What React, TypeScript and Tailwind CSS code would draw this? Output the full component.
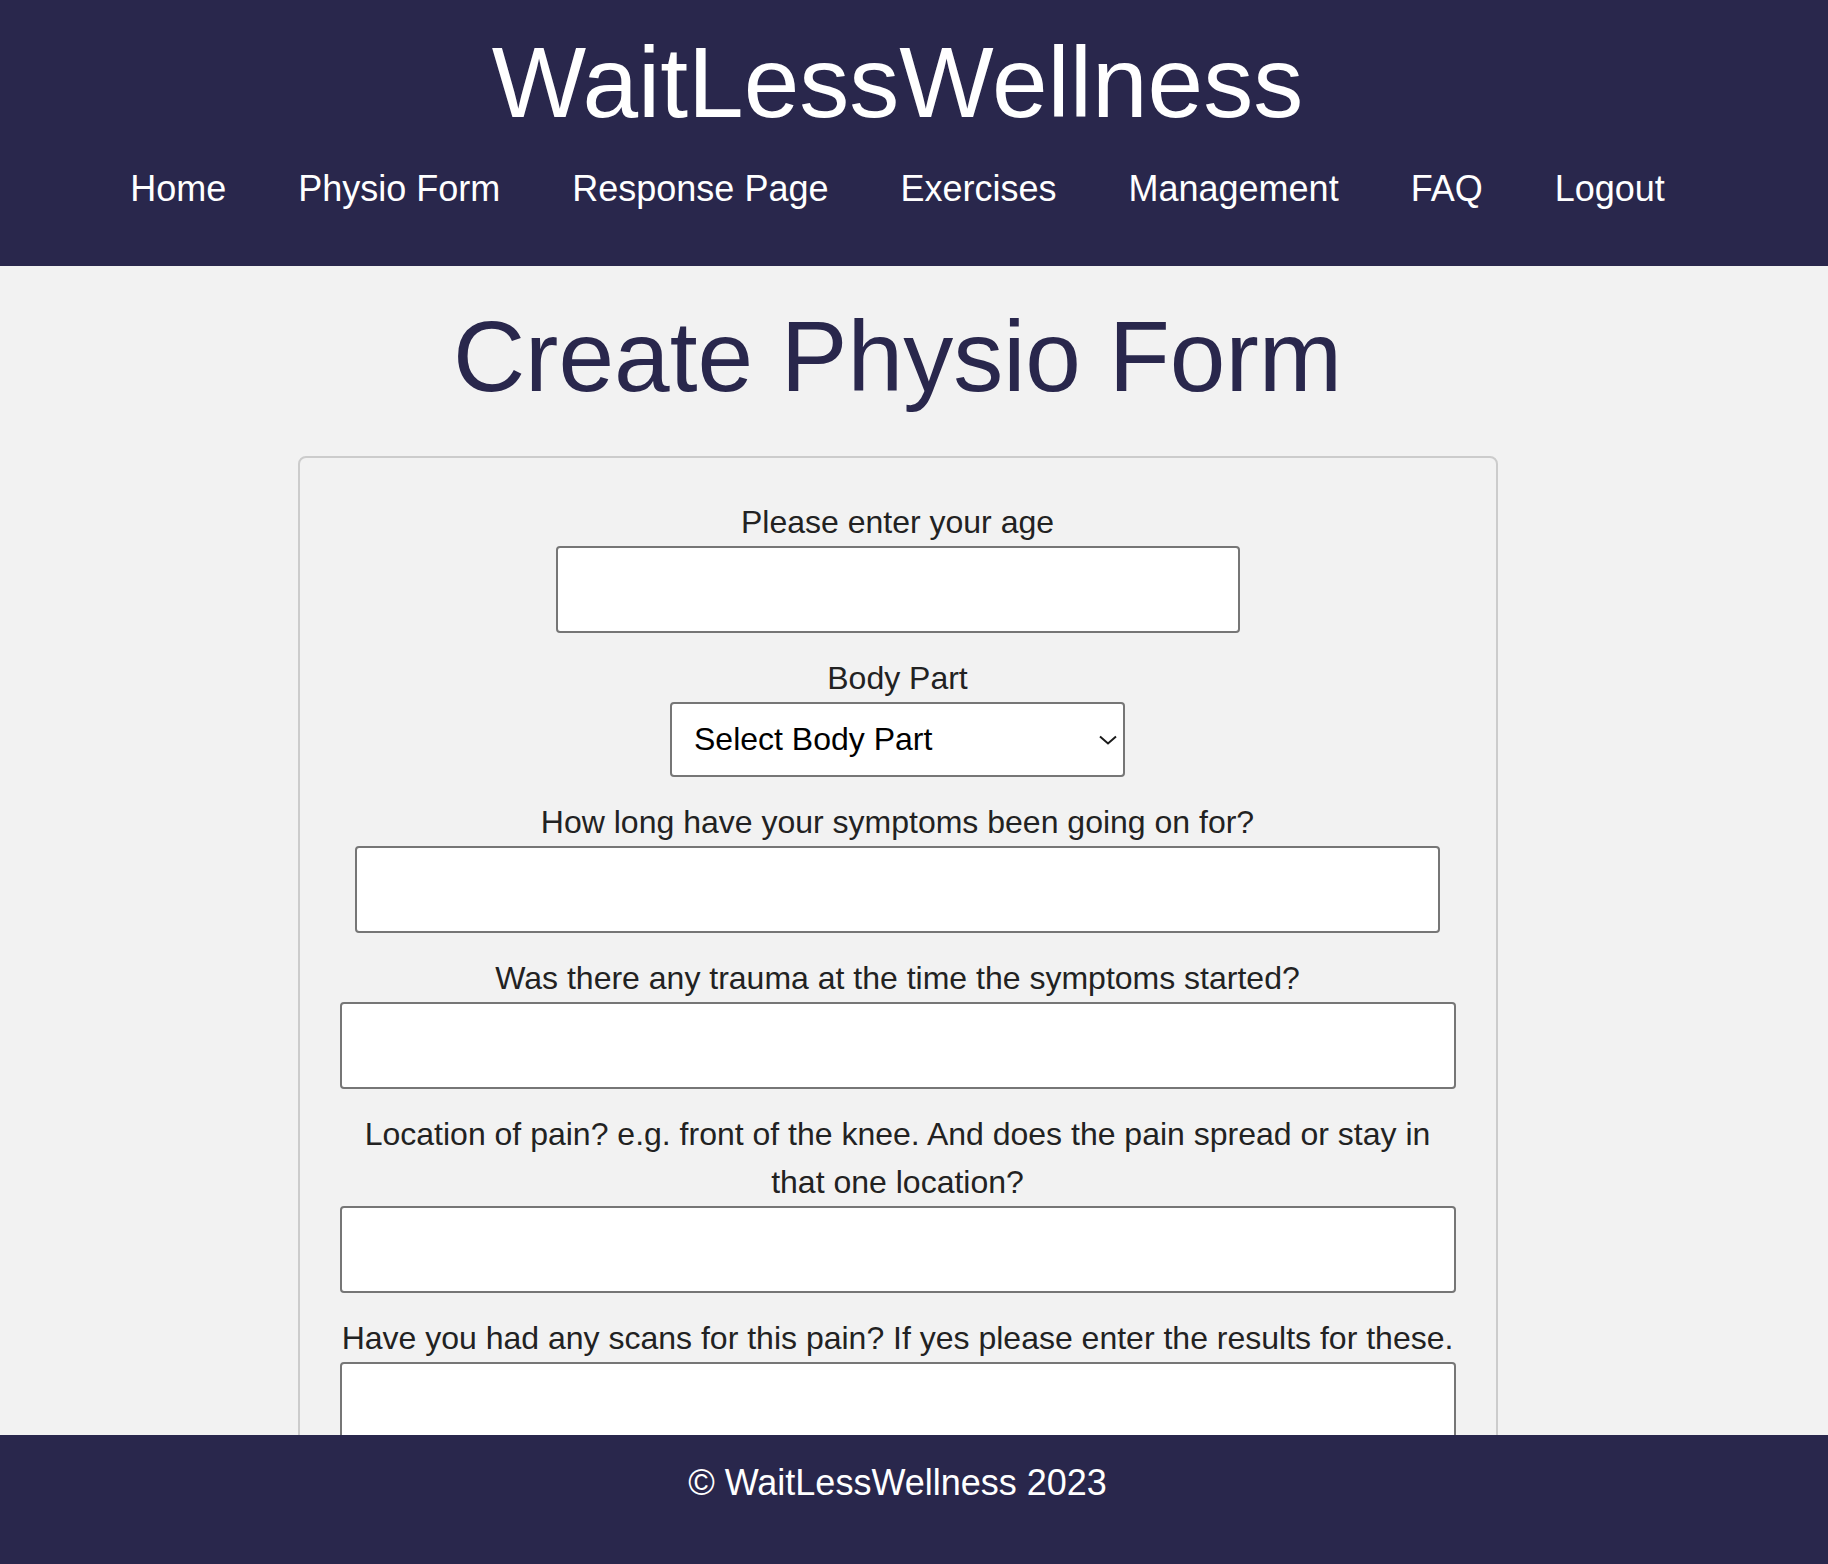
import { useState } from "react"

const NAV_LINKS = ["Home", "Physio Form", "Response Page", "Exercises", "Management", "FAQ", "Logout"]

const BODY_PARTS = ["Knee", "Shoulder", "Back", "Neck", "Hip", "Ankle", "Elbow", "Wrist"]

interface FieldProps {
    label: string
    width: string
    value: string
    onChange: (v: string) => void
}

function Field({ label, width, value, onChange }: FieldProps) {
    return (
        <div className="flex flex-col items-center mb-[21.5px] w-full">
            <label className="text-[32px] leading-[48px] text-[#222] text-center">{label}</label>
            <input
                type="text"
                value={value}
                onChange={e => onChange(e.target.value)}
                className={`${width} h-[86.5px] bg-white border-2 border-[#767676] rounded-[4px] px-3 text-[32px] outline-none`}
            />
        </div>
    )
}

export default function App() {
    const [form, setForm] = useState({
        age: "",
        bodyPart: "",
        duration: "",
        trauma: "",
        location: "",
        scans: "",
    })

    const set = (key: keyof typeof form) => (v: string) => setForm(f => ({ ...f, [key]: v }))

    return (
        <div className="relative h-screen overflow-hidden bg-[#f2f2f2] font-['Liberation_Sans',Arial,sans-serif]">
            <header className="bg-[#29274c] pt-[32px] pb-[59px] pr-[33px]">
                <h1 className="text-white text-center text-[100px] leading-[100px]">WaitLessWellness</h1>
                <nav className="mt-[39px] flex justify-center gap-[72px] text-[36px] leading-[36px] text-white">
                    {NAV_LINKS.map(link => (
                        <a key={link} href="#" className="whitespace-nowrap">{link}</a>
                    ))}
                </nav>
            </header>

            <main className="pr-[33px]">
                <h2 className="mt-[40px] text-center text-[100px] leading-[100px] text-[#29274c]">Create Physio Form</h2>

                <form
                    className="mt-[50px] mx-auto w-[1200px] border-2 border-[#cccccc] rounded-[8px] px-[40px] pt-[40px] pb-[40px] flex flex-col items-center"
                    onSubmit={e => e.preventDefault()}
                >
                    <Field label="Please enter your age" width="w-[684px]" value={form.age} onChange={set("age")} />

                    <div className="flex flex-col items-center mb-[21.5px]">
                        <label className="text-[32px] leading-[48px] text-[#222]">Body Part</label>
                        <div className="relative w-[455px] h-[74.5px]">
                            <select
                                value={form.bodyPart}
                                onChange={e => set("bodyPart")(e.target.value)}
                                className="appearance-none w-full h-full bg-white border-2 border-[#767676] rounded-[4px] pl-[22px] text-[32px] text-black outline-none"
                            >
                                <option value="">Select Body Part</option>
                                {BODY_PARTS.map(p => <option key={p} value={p}>{p}</option>)}
                            </select>
                            <svg className="absolute right-[8px] top-[32.5px] pointer-events-none" width="18" height="10" viewBox="0 0 18 10" fill="none">
                                <path d="M1 1.5 L9 8.5 L17 1.5" stroke="#1a1a1a" strokeWidth="2" />
                            </svg>
                        </div>
                    </div>

                    <Field label="How long have your symptoms been going on for?" width="w-[1085px]" value={form.duration} onChange={set("duration")} />
                    <Field label="Was there any trauma at the time the symptoms started?" width="w-full" value={form.trauma} onChange={set("trauma")} />
                    <Field label="Location of pain? e.g. front of the knee. And does the pain spread or stay in that one location?" width="w-full" value={form.location} onChange={set("location")} />
                    <Field label="Have you had any scans for this pain? If yes please enter the results for these." width="w-full" value={form.scans} onChange={set("scans")} />
                </form>
            </main>

            <footer className="absolute bottom-0 inset-x-0 h-[129px] bg-[#29274c] pt-[30px] pr-[33px] text-center text-white text-[36px] leading-[36px]">
                © WaitLessWellness 2023
            </footer>
        </div>
    )
}
